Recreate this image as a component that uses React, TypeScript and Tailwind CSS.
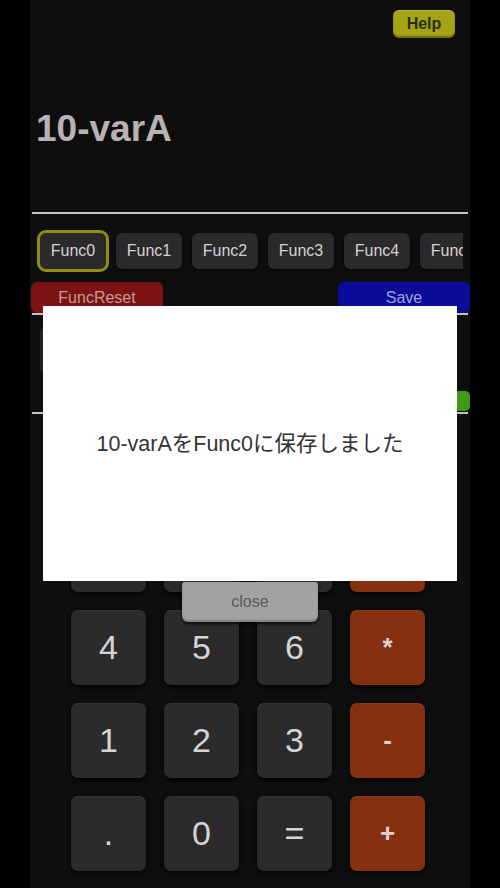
import React from 'react'

const funcs = ['Func0', 'Func1', 'Func2', 'Func3', 'Func4', 'Func5']

type Key = { label: string; op?: boolean }

// the first two rows sit under the dialog, so their labels are not visible
const keys: Key[] = [
  { label: '' },
  { label: '' },
  { label: '' },
  { label: '', op: true },
  { label: '' },
  { label: '' },
  { label: '' },
  { label: '', op: true },
  { label: '4' },
  { label: '5' },
  { label: '6' },
  { label: '*', op: true },
  { label: '1' },
  { label: '2' },
  { label: '3' },
  { label: '-', op: true },
  { label: '.' },
  { label: '0' },
  { label: '=' },
  { label: '+', op: true },
]

function Divider() {
  return <div className="mx-[2px] h-[2px] bg-[#c4c4c4]" />
}

export default function App() {
  return (
    <div
      className="relative min-h-[888px] w-full bg-black"
      style={{ fontFamily: '"Liberation Sans", "Noto Sans CJK JP", sans-serif' }}
    >
      <div className="mx-auto flex min-h-[888px] w-[440px] flex-col bg-[#0e0e0f]">
        {/* header */}
        <div className="flex justify-end pr-[15px] pt-[10px]">
          <button className="h-[28px] w-[62px] rounded-[6px] bg-[#a4a414] text-[16px] font-bold text-[#2b2b12] shadow-[inset_0_-2px_2px_rgba(0,0,0,0.35),inset_0_1px_1px_rgba(255,255,255,0.25)]">
            Help
          </button>
        </div>

        <div className="mt-[72px] pl-[6px] text-[37px] font-bold leading-none text-[#b9b2b2]">
          10-varA
        </div>

        <div className="mt-[65px]">
          <Divider />
        </div>

        {/* function slots */}
        <div className="mr-[7px] mt-[15px] flex gap-[10px] overflow-hidden py-[4px] pl-[10px]">
          {funcs.map((f, i) => (
            <button
              key={f}
              className={`h-[36px] w-[66px] shrink-0 rounded-[6px] bg-[#2a2a2b] text-[16px] text-[#d2d2d2] shadow-[0_1px_3px_rgba(0,0,0,0.8)] ${
                i === 0 ? 'outline-[3px] outline-solid outline-[#8e8e12]' : ''
              }`}
            >
              {f}
            </button>
          ))}
        </div>

        <div className="mt-[9px] flex justify-between">
          <button className="ml-[1px] h-[31px] w-[132px] rounded-[6px] bg-[#7c1313] text-[16px] text-[#c79a9a]">
            FuncReset
          </button>
          <button className="h-[31px] w-[132px] rounded-[6px] bg-[#0b0b98] text-[16px] text-[#a3a3d8]">
            Save
          </button>
        </div>

        <Divider />

        <div className="flex h-[97px] flex-col justify-between py-[13px] pl-[10px]">
          <div className="h-[44px] w-[300px] rounded-[4px] bg-[#232324]" />
          <div className="flex justify-end">
            <button className="-mb-[12px] h-[20px] w-[70px] rounded-[5px] bg-[#3f9a16]" />
          </div>
        </div>

        <Divider />

        {/* keypad */}
        <div className="mt-[10px] grid grid-cols-[repeat(4,75px)] gap-[18px] pl-[41px]">
          {keys.map((k, i) => (
            <button
              key={i}
              className={`flex h-[75px] w-[75px] items-center justify-center rounded-[7px] shadow-[0_2px_4px_rgba(0,0,0,0.9),inset_0_1px_1px_rgba(255,255,255,0.06)] ${
                k.op
                  ? 'bg-[#873011] text-[26px] font-bold text-[#dcd2cc]'
                  : 'bg-[#2b2b2c] text-[34px] text-[#d4d4d4]'
              }`}
            >
              {k.label}
            </button>
          ))}
        </div>
      </div>

      {/* message dialog */}
      <div className="absolute left-[43px] top-[306px] flex h-[275px] w-[414px] items-center justify-center bg-white">
        <p className="mt-[2px] text-[21.5px] text-[#333333]">10-varAをFunc0に保存しました</p>
      </div>
      <button className="absolute left-[182px] top-[582px] h-[40px] w-[136px] rounded-b-[6px] rounded-t-[3px] bg-[#a2a2a2] text-[16px] text-[#5a5a5a] shadow-[0_2px_3px_rgba(0,0,0,0.7),inset_0_-2px_2px_rgba(0,0,0,0.2)]">
        close
      </button>
    </div>
  )
}
